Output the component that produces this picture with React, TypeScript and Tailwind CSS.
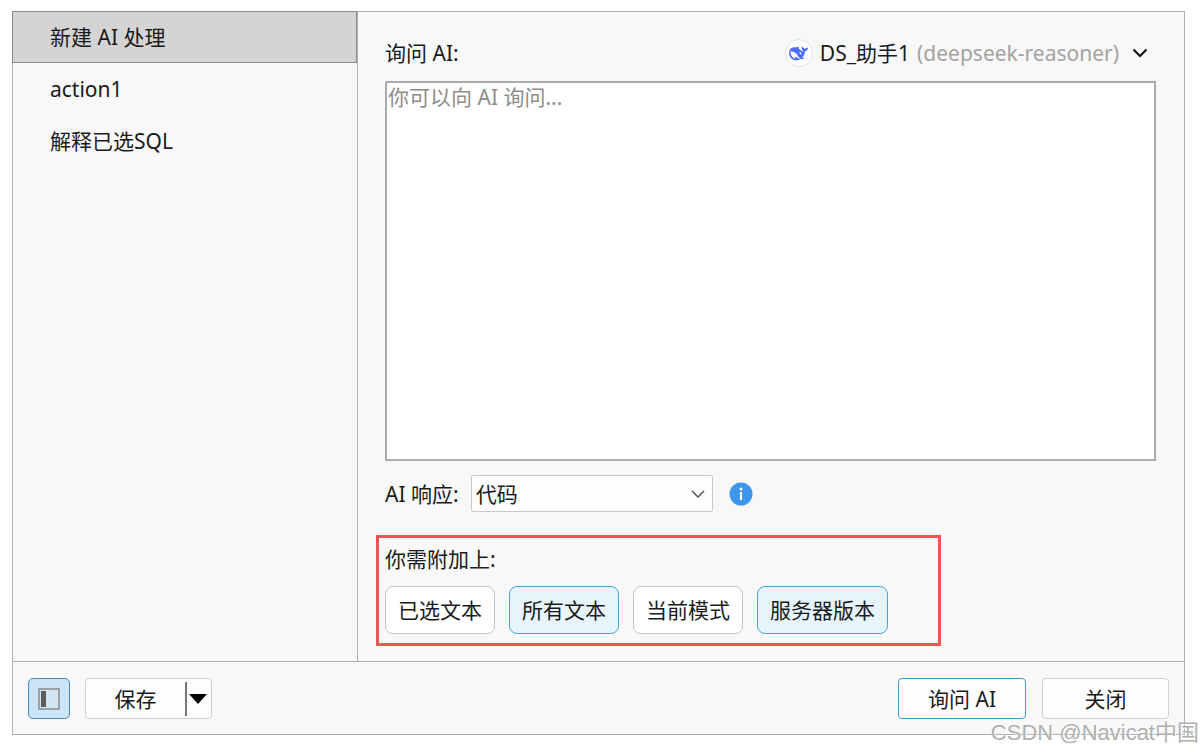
import { useState } from "react";

const sidebarItems = ["新建 AI 处理", "action1", "解释已选SQL"];
const attachments = ["已选文本", "所有文本", "当前模式", "服务器版本"];

function DeepSeekIcon() {
  return (
    <span className="flex size-7 items-center justify-center rounded-full border border-[#e0e1f2] bg-white">
      <svg viewBox="0 0 24 24" className="size-[19px]" fill="#4d6bfe" aria-hidden="true">
        <path d="M23.748 4.482c-.254-.124-.364.113-.512.234-.051.039-.094.09-.137.136-.372.397-.806.657-1.373.626-.829-.046-1.537.214-2.163.848-.133-.782-.575-1.248-1.247-1.548-.352-.156-.708-.311-.955-.65-.172-.241-.219-.51-.305-.774-.055-.16-.11-.323-.293-.35-.2-.031-.278.136-.356.276-.313.572-.434 1.202-.422 1.84.027 1.436.633 2.58 1.838 3.393.137.093.172.187.129.323-.082.28-.18.552-.266.833-.055.179-.137.217-.329.14a5.526 5.526 0 01-1.736-1.18c-.857-.828-1.631-1.742-2.597-2.458a11.365 11.365 0 00-.689-.471c-.985-.957.13-1.743.388-1.836.27-.098.093-.432-.779-.428-.872.004-1.67.295-2.687.684a3.055 3.055 0 01-.465.137 9.597 9.597 0 00-2.883-.102c-1.885.21-3.39 1.102-4.497 2.623C.082 8.606-.231 10.684.152 12.85c.403 2.284 1.569 4.175 3.36 5.653 1.858 1.533 3.997 2.284 6.438 2.14 1.482-.085 3.133-.284 4.994-1.86.47.234.962.327 1.78.397.63.059 1.236-.03 1.705-.128.735-.156.684-.837.419-.961-2.155-1.004-1.682-.595-2.113-.926 1.096-1.296 2.746-2.642 3.392-7.003.05-.347.007-.565 0-.845-.004-.17.035-.237.23-.256a4.173 4.173 0 001.545-.475c1.396-.763 1.96-2.015 2.093-3.517.02-.23-.004-.467-.247-.588z" />
        <path
          fill="#fff"
          d="M11.581 18c-2.089-1.642-3.102-2.183-3.52-2.16-.392.024-.321.471-.235.763.09.288.207.486.371.739.114.167.192.416-.113.603-.673.416-1.842-.14-1.897-.167-1.361-.802-2.5-1.86-3.301-3.307-.774-1.393-1.224-2.887-1.298-4.482-.02-.386.093-.522.477-.592a4.696 4.696 0 011.529-.039c2.132.312 3.946 1.265 5.468 2.774.868.86 1.525 1.887 2.202 2.891.72 1.066 1.494 2.082 2.48 2.914.348.292.625.514.891.677-.802.09-2.14.11-3.054-.614zM12.4 10.500c1.200-.5 2.900.3 3.400 1.500.1.500.1.800-.2 1.100-.8.300-1.500.1-1.900-.7-.2-.5.1-.9-.4-1.200-.4-.2-.9-.2-.9-.7z"
        />
      </svg>
    </span>
  );
}

function App() {
  const [active, setActive] = useState(0);
  const [selected, setSelected] = useState<string[]>(["所有文本", "服务器版本"]);

  const toggle = (name: string) =>
    setSelected((prev) => (prev.includes(name) ? prev.filter((n) => n !== name) : [...prev, name]));

  return (
    <div className="relative flex min-h-screen bg-white pt-[11px] pr-[18px] pb-[17px] pl-3 font-['Noto_Sans','Noto_Sans_CJK_SC',sans-serif] text-[21px] leading-7 text-[#1a1a1a]">
      <div className="flex min-w-0 flex-1 flex-col border border-[#b0b0b0] bg-[#f8f8f8]">
        <div className="flex flex-1">
          <nav className="-mt-px -ml-px w-[346px] shrink-0 border-r border-[#b0b0b0]">
            {sidebarItems.map((item, i) => (
              <button
                key={item}
                type="button"
                onClick={() => setActive(i)}
                className={
                  i === active
                    ? "block h-[52px] w-full border border-[#8c8c8c] bg-[#d4d4d4] pl-[37px] text-left"
                    : "block h-[52px] w-full border border-transparent pl-[37px] text-left"
                }
              >
                {item}
              </button>
            ))}
          </nav>

          <main className="flex min-w-0 flex-1 flex-col pt-[27px] pr-7 pb-[15px] pl-[27px]">
            <div className="flex items-center justify-between">
              <label htmlFor="prompt">询问 AI:</label>
              <button type="button" className="flex items-center gap-[7px] pr-2">
                <DeepSeekIcon />
                <span>DS_助手1</span>
                <span className="text-[#a3a3a3]">(deepseek-reasoner)</span>
                <svg viewBox="0 0 16 16" className="ml-[6px] size-4" fill="none" stroke="#111" strokeWidth="2" aria-hidden="true">
                  <path d="M1.5 4.5 8 11l6.500-6.500" />
                </svg>
              </button>
            </div>
            <textarea
              id="prompt"
              placeholder="你可以向 AI 询问..."
              className="mt-[14px] block min-h-40 w-full flex-1 resize-none border-2 border-[#ababab] bg-white px-px outline-none placeholder:text-[#8c8c8c]"
            />

            <div className="mt-[14px] flex items-center">
              <label htmlFor="response">AI 响应:</label>
              <div className="ml-3 grid w-[242px] items-center">
                <select
                  id="response"
                  className="col-start-1 row-start-1 h-[37px] w-full appearance-none rounded-xs border border-[#c9c9c9] bg-[#fdfdfd] pr-8 pl-1 outline-none"
                >
                  <option>代码</option>
                </select>
                <svg
                  viewBox="0 0 14 14"
                  className="pointer-events-none col-start-1 row-start-1 mr-2 size-[14px] justify-self-end"
                  fill="none"
                  stroke="#555"
                  strokeWidth="1.5"
                  aria-hidden="true"
                >
                  <path d="M1 4l6 6 6-6" />
                </svg>
              </div>
              <button type="button" aria-label="信息" className="ml-4">
                <svg viewBox="0 0 24 24" className="size-6" aria-hidden="true">
                  <circle cx="12" cy="12" r="11.500" fill="#3d96ee" />
                  <circle cx="12" cy="7" r="1.500" fill="#fff" />
                  <path d="M12 10v8" stroke="#fff" strokeWidth="2.200" />
                </svg>
              </button>
            </div>

            <fieldset className="mt-[23px] -ml-[9px] w-[565px] max-w-full border-[3px] border-[#ef5454] px-[6px] pt-[7px] pb-[9px]">
              <div className="pb-[13px]">你需附加上:</div>
              <div className="flex gap-[14px]">
                {attachments.map((name) => {
                  const on = selected.includes(name);
                  return (
                    <button
                      key={name}
                      type="button"
                      aria-pressed={on}
                      onClick={() => toggle(name)}
                      className={
                        on
                          ? "h-12 rounded-lg border border-[#45a3e0] bg-[#e7f4fc] px-3"
                          : "h-12 rounded-lg border border-[#c4c4c4] bg-white px-3"
                      }
                    >
                      {name}
                    </button>
                  );
                })}
              </div>
            </fieldset>
          </main>
        </div>

        <footer className="flex items-center border-t border-[#b0b0b0] px-[15px] pt-4 pb-[15px]">
          <button
            type="button"
            aria-label="侧边栏"
            className="flex h-[41px] w-[42px] items-center justify-center rounded-[5px] border border-[#4f86b8] bg-[#cce4f7]"
          >
            <svg viewBox="0 0 22 22" className="size-[22px]" aria-hidden="true">
              <rect x="1" y="1" width="20" height="20" fill="#d3e5f3" stroke="#8a8a8a" strokeWidth="1.500" />
              <rect x="3" y="3" width="5" height="16" fill="#5c5c5c" />
            </svg>
          </button>
          <div className="ml-[15px] flex h-[41px] w-[127px] items-center rounded-[4px] border border-[#d0d0d0] bg-[#fdfdfd]">
            <button type="button" className="h-full flex-1">
              保存
            </button>
            <button type="button" aria-label="更多保存选项" className="flex h-[34px] w-[26px] items-center border-l-2 border-[#777] pl-[2px]">
              <svg viewBox="0 0 18 10" className="h-[10px] w-[18px]" aria-hidden="true">
                <path d="M0 0h18L9 10z" fill="#000" />
              </svg>
            </button>
          </div>
          <button type="button" className="ml-auto h-[41px] w-32 rounded-[4px] border border-[#3f97d6] bg-[#fdfdfd]">
            询问 AI
          </button>
          <button type="button" className="ml-4 h-[41px] w-[127px] rounded-[4px] border border-[#d0d0d0] bg-[#fdfdfd]">
            关闭
          </button>
        </footer>
      </div>

      <div className="pointer-events-none absolute right-1 bottom-[3px] font-['Liberation_Sans','Noto_Sans_CJK_SC',sans-serif] text-[22px] leading-8 text-[#b0b0b0] [text-shadow:1px_1px_0_#fff]">
        CSDN @Navicat中国
      </div>
    </div>
  );
}

export default App;
